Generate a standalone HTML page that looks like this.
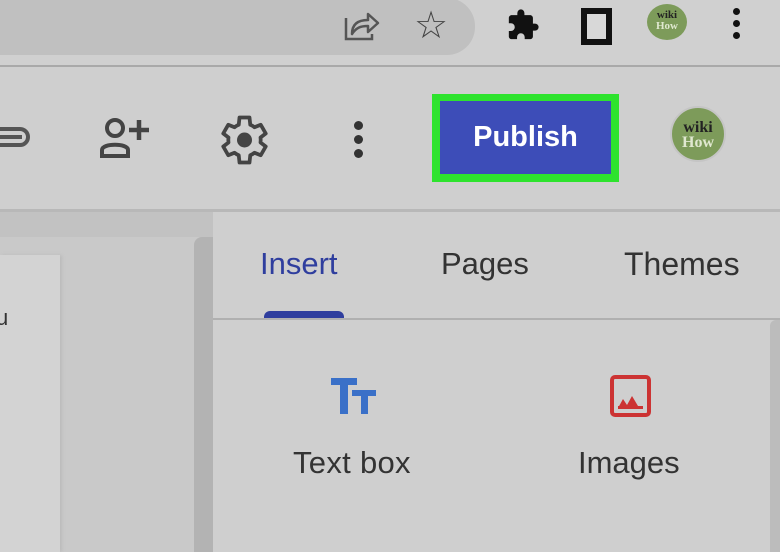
<!DOCTYPE html>
<html><head><style>
body{margin:0;width:780px;height:552px;overflow:hidden;background:#cfcfcf;font-family:"Liberation Sans",sans-serif;position:relative}
.a{position:absolute}
</style></head><body>
<div class="a" style="left:0;top:0;width:780px;height:66px;background:#d0d0d0"></div>
<div class="a" style="left:-30px;top:-2px;width:505px;height:57px;background:#c0c0c0;border-radius:0 28px 28px 0"></div>
<div class="a" style="left:0;top:65px;width:780px;height:2px;background:#a9a9a9"></div>
<svg class="a" style="left:342px;top:8px" width="40" height="34" viewBox="0 0 40 34"><path d="M4 10 V31 H30 V26" fill="none" stroke="#555" stroke-width="2.5"/><path d="M10 26 C10 16 16 12 26 12 V6 L36 15 L26 24 V18 C18 18 14 20 10 26Z" fill="none" stroke="#555" stroke-width="2.5" stroke-linejoin="round"/></svg>
<div class="a" style="left:414px;top:3px;font-size:38px;color:#444">☆</div>
<svg class="a" style="left:506px;top:8px" width="34" height="34" viewBox="0 0 24 24"><path d="M20.5 11H19V7c0-1.1-.9-2-2-2h-4V3.5a2.5 2.5 0 0 0-5 0V5H4c-1.1 0-2 .9-2 2v3.8h1.5a2.7 2.7 0 0 1 0 5.4H2V20c0 1.1.9 2 2 2h3.8v-1.5a2.7 2.7 0 0 1 5.4 0V22H17c1.1 0 2-.9 2-2v-4h1.5a2.5 2.5 0 0 0 0-5z" fill="#111"/></svg>
<div class="a" style="left:581px;top:8px;width:19px;height:25px;border:6px solid #111;background:#d8d8d8"></div>
<div class="a" style="left:647px;top:4px;width:40px;height:36px;border-radius:50%;background:#7d9b5a;color:#222;font:bold 11px 'Liberation Serif',serif;text-align:center;line-height:11px;padding-top:6px;box-sizing:border-box">wiki<br><span style="color:#e0e8d0">How</span></div>
<div class="a" style="left:733px;top:8px;width:8px">
<div style="width:7px;height:7px;border-radius:50%;background:#111;margin-bottom:5px"></div><div style="width:7px;height:7px;border-radius:50%;background:#111;margin-bottom:5px"></div><div style="width:7px;height:7px;border-radius:50%;background:#111"></div></div>
<svg class="a" style="left:0;top:122px" width="34" height="30" viewBox="0 0 34 30"><path d="M0 7 H20 A8 8 0 0 1 20 23 H0" fill="none" stroke="#555" stroke-width="4"/><path d="M0 15 H22" stroke="#555" stroke-width="4"/></svg>
<svg class="a" style="left:98px;top:116px" width="54" height="44" viewBox="0 0 54 44"><circle cx="17" cy="12" r="8" fill="none" stroke="#444" stroke-width="4"/><path d="M4 40 V34 C4 27 30 27 30 34 V40 Z" fill="none" stroke="#444" stroke-width="4"/><path d="M41 4 V24 M31 14 H51" stroke="#444" stroke-width="4.5"/></svg>
<svg class="a" style="left:212px;top:110px" width="60" height="60" viewBox="0 0 24 24"><path d="M19.4 13a7.5 7.5 0 0 0 0-2l2.1-1.6-2-3.5-2.5 1a7 7 0 0 0-1.7-1L15 3h-4l-.3 2.9a7 7 0 0 0-1.7 1l-2.5-1-2 3.5L6.6 11a7.5 7.5 0 0 0 0 2l-2.1 1.6 2 3.5 2.5-1a7 7 0 0 0 1.7 1L11 21h4l.3-2.9a7 7 0 0 0 1.7-1l2.5 1 2-3.5z" fill="none" stroke="#444" stroke-width="1.5" stroke-linejoin="round"/><circle cx="13" cy="12" r="3" fill="#444"/></svg>
<div class="a" style="left:354px;top:121px;width:9px">
<div style="width:9px;height:9px;border-radius:50%;background:#333;margin-bottom:5px"></div><div style="width:9px;height:9px;border-radius:50%;background:#333;margin-bottom:5px"></div><div style="width:9px;height:9px;border-radius:50%;background:#333"></div></div>
<div class="a" style="left:432px;top:94px;width:187px;height:88px;background:#2ee32e"></div>
<div class="a" style="left:440px;top:101px;width:171px;height:73px;background:#3d4db8;color:#fff;font-size:29px;font-weight:bold;text-align:center;line-height:73px">Publish</div>
<div class="a" style="left:670px;top:106px;width:56px;height:56px;border-radius:50%;background:#7d9b5a;border:2px solid #c5c5c5;font:bold 16px 'Liberation Serif',serif;text-align:center;line-height:15px;padding-top:12px;box-sizing:border-box;color:#222">wiki<br><span style="color:#e0e8d0">How</span></div>
<div class="a" style="left:0;top:209px;width:780px;height:3px;background:#b8b8b8"></div>
<div class="a" style="left:0;top:212px;width:213px;height:340px;background:#c9c9c9"></div>
<div class="a" style="left:0;top:212px;width:213px;height:25px;background:#c2c2c2"></div>
<div class="a" style="left:0;top:255px;width:60px;height:297px;background:#d3d3d3;box-shadow:2px 0 3px #bbb"></div>
<div class="a" style="left:-4px;top:305px;font-size:22px;color:#333">u</div>
<div class="a" style="left:194px;top:237px;width:19px;height:315px;background:#b3b3b3;border-radius:8px 0 0 0"></div>
<div class="a" style="left:213px;top:212px;width:567px;height:340px;background:#cfcfcf"></div>
<div class="a" style="left:260px;top:246px;font-size:31px;color:#2f3e9e">Insert</div>
<div class="a" style="left:441px;top:246px;font-size:31px;color:#333">Pages</div>
<div class="a" style="left:624px;top:246px;font-size:32px;color:#333">Themes</div>
<div class="a" style="left:264px;top:311px;width:80px;height:8px;background:#2f3e9e;border-radius:6px 6px 0 0"></div>
<div class="a" style="left:213px;top:318px;width:567px;height:2px;background:#b0b0b0"></div>
<div class="a" style="left:770px;top:320px;width:10px;height:232px;background:#bcbcbc;border-radius:6px 0 0 0"></div>
<svg class="a" style="left:330px;top:377px" width="46" height="38" viewBox="0 0 46 38"><path d="M1 1 H27 V8 H18 V37 H10 V8 H1Z M22 13 H46 V19 H38 V37 H31 V19 H22Z" fill="#3a70c8"/></svg>
<svg class="a" style="left:610px;top:375px" width="41" height="42" viewBox="0 0 41 42"><rect x="2" y="2" width="37" height="38" rx="3" fill="none" stroke="#cc3333" stroke-width="4"/><path d="M8 33 L13 24 L17 30 L22 21 L28 31 V33Z" fill="#cc3333"/><rect x="8" y="31" width="25" height="3" fill="#cc3333"/></svg>
<div class="a" style="left:293px;top:445px;font-size:31px;color:#333;letter-spacing:0.3px">Text box</div>
<div class="a" style="left:578px;top:445px;font-size:31px;color:#333">Images</div>
</body></html>
